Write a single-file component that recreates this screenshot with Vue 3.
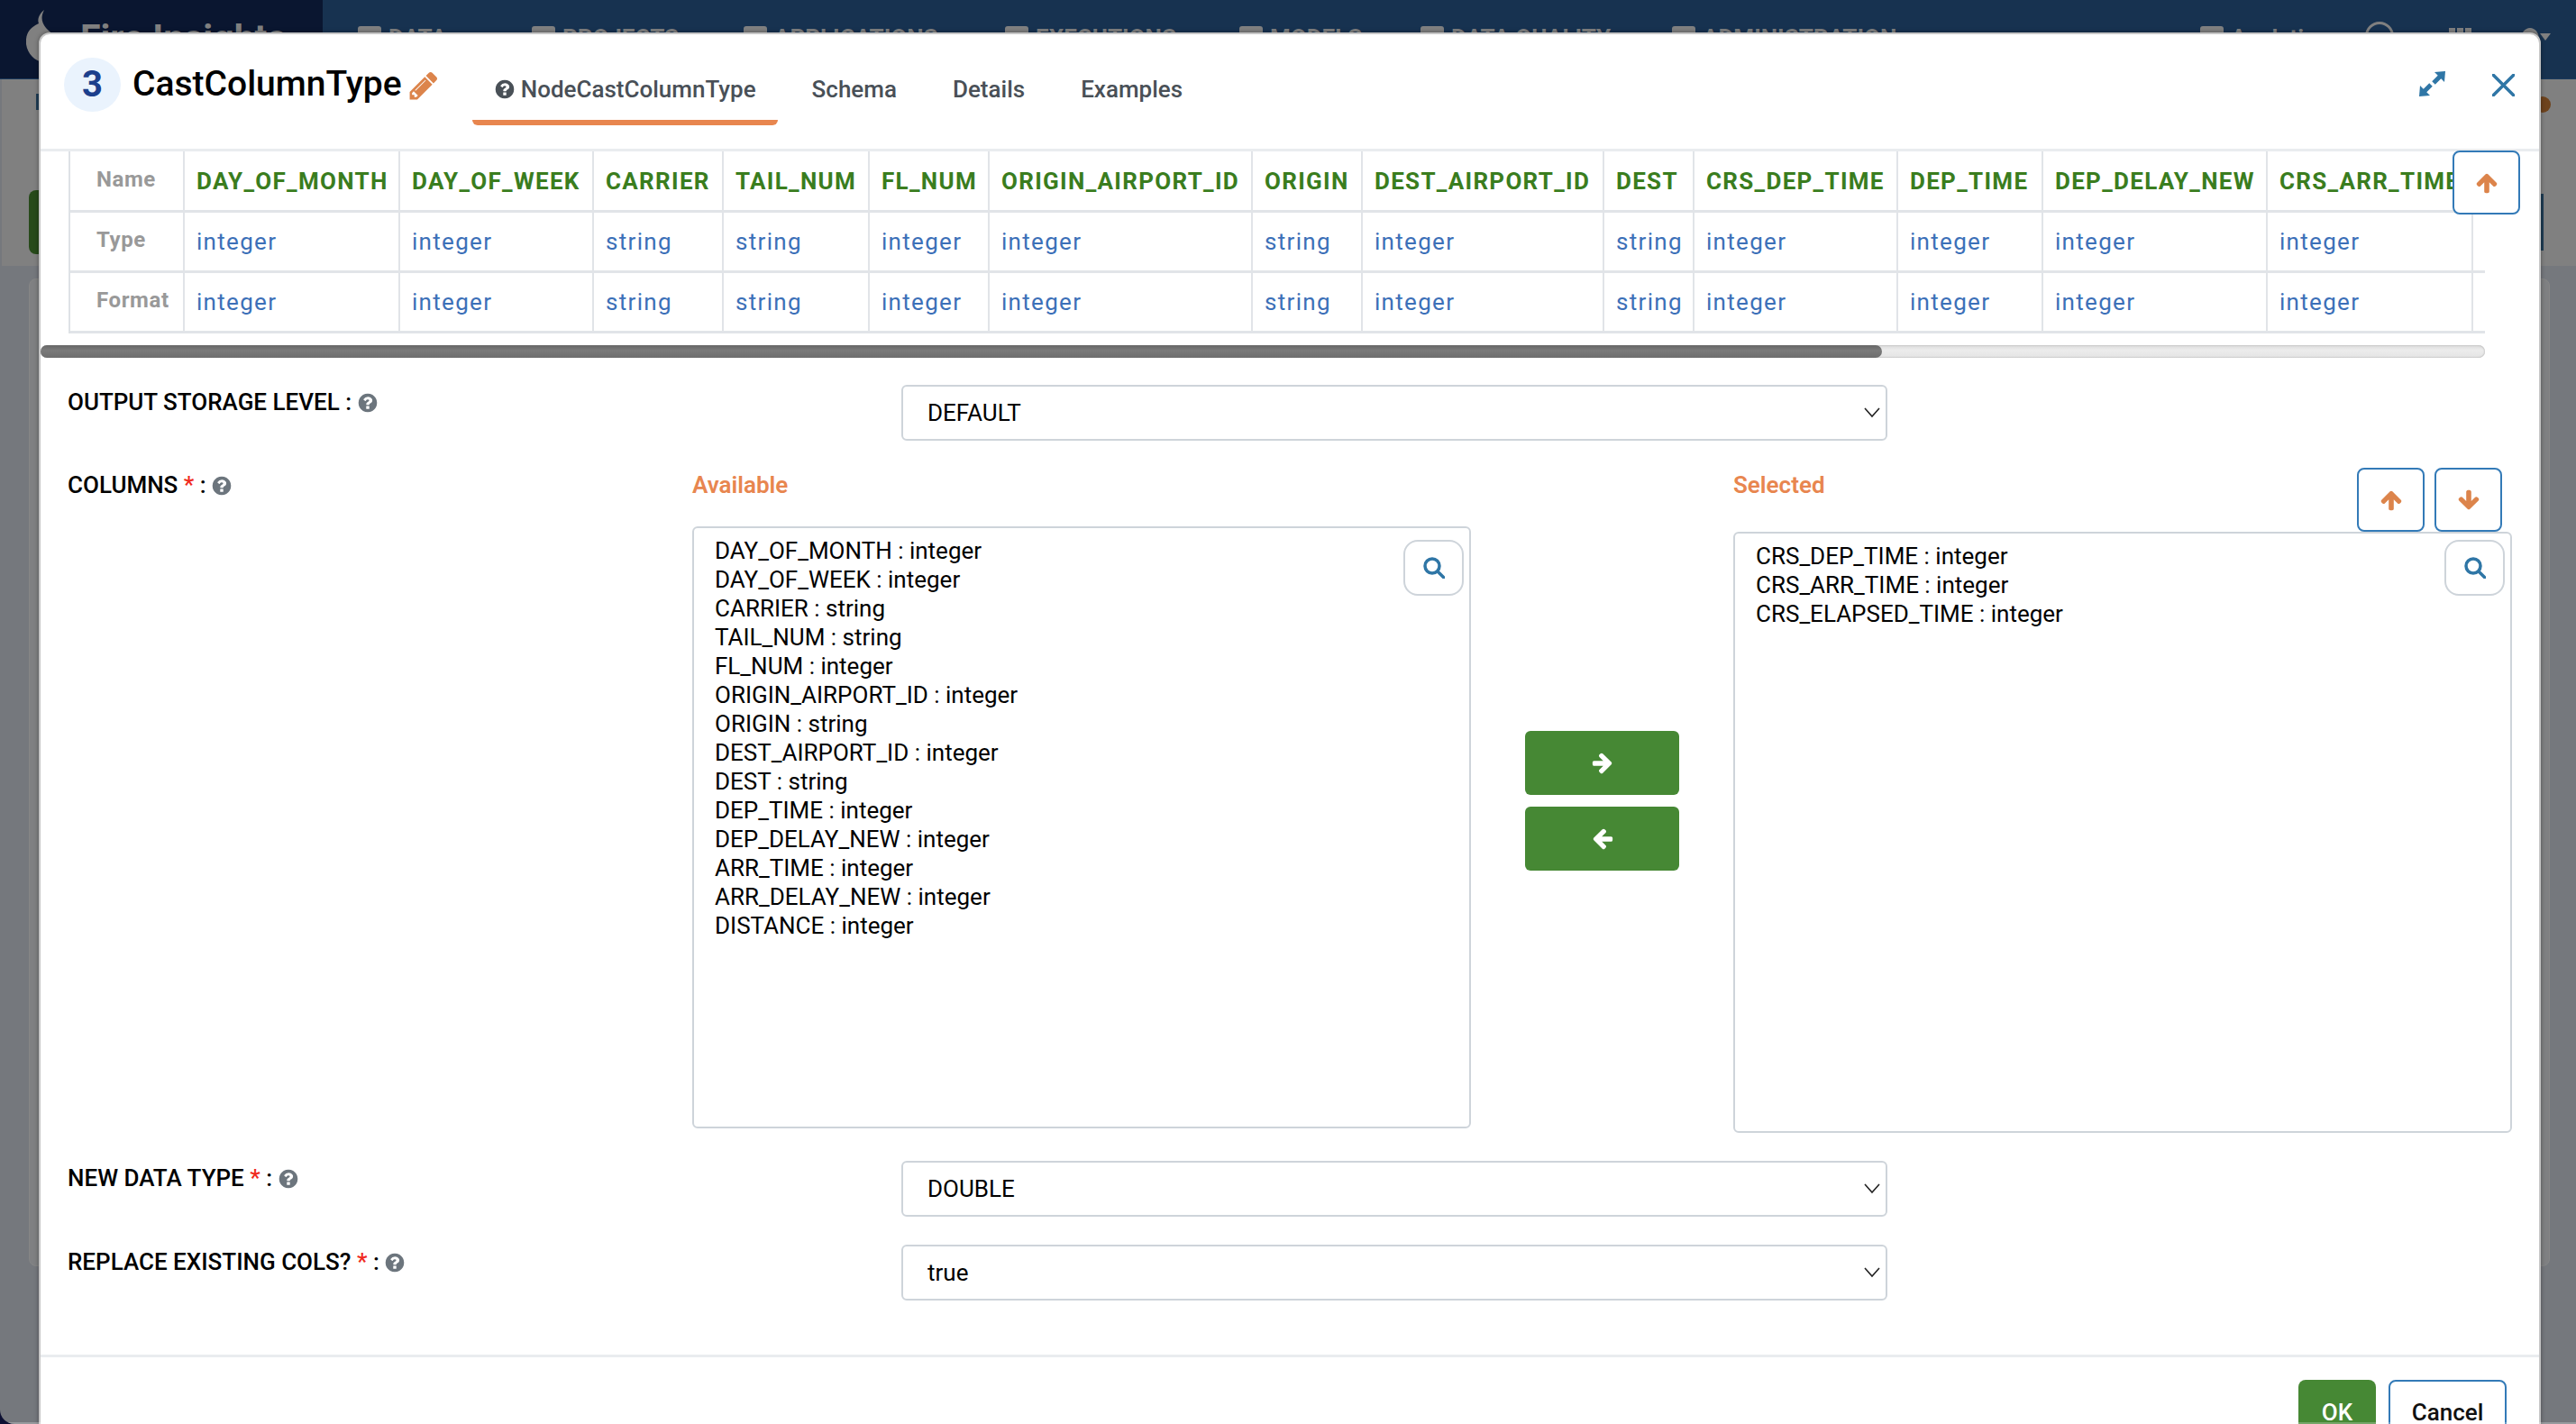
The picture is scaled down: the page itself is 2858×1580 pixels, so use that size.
<template>
  <div class="page">
    <!-- шапка за модалкой, видна только верхушка -->
    <header class="navbar">
      <div class="brand">
        <svg class="flame" viewBox="0 0 44 58">
          <path d="M20 0c-4 8-3 14 2 20 6 6 12 12 20 10 2 12-4 24-16 28-12 2-24-6-26-20C-1 26 4 20 14 15 12 10 15 4 20 0z" />
        </svg>
        <span class="brand-name">Fire Insights</span>
      </div>
      <nav class="nav">
        <a v-for="item in navItems" :key="item.label" class="nav-item" :style="{ width: item.width + 'px' }">
          <i class="nav-icon"></i>{{ item.label }}
        </a>
      </nav>
      <div class="nav-right">
        <span class="nav-item">
          <i class="nav-icon"></i>Analytics
        </span>
        <i class="nav-dot"></i>
        <i class="nav-grid"></i>
        <i class="nav-user"></i>
        <i class="nav-caret"></i>
      </div>
    </header>

    <div class="backdrop-top">
      <i class="bg-tab"></i>
      <i class="bg-btn"></i>
      <i class="bg-right-dot"></i>
      <i class="bg-right-line"></i>
    </div>
    <div class="bg-card"></div>

    <div class="modal">
      <div class="modal-head">
        <span class="step">3</span>
        <h2 class="title">CastColumnType</h2>
        <svg class="pencil" viewBox="0 0 1792 1792">
          <path :d="icons.pencil" />
        </svg>
        <ul class="tabs">
          <li class="tab active">
            <svg class="tab-help" viewBox="0 0 1792 1792"><path :d="icons.help" /></svg>
            NodeCastColumnType
          </li>
          <li class="tab">Schema</li>
          <li class="tab">Details</li>
          <li class="tab">Examples</li>
        </ul>
        <div class="head-actions">
          <svg class="expand" viewBox="0 0 29 28">
            <polygon points="17,1 29,0 28,12" />
            <polygon points="1,16 0,28 12,27" />
            <path d="M23 6l-7 7M6 22l7-7" />
          </svg>
          <svg class="close" viewBox="0 0 25 25">
            <path d="M1 1l23 23M24 1L1 24" />
          </svg>
        </div>
      </div>

      <div class="schema-wrap">
        <table class="schema">
          <tbody>
            <tr v-for="row in rows" :key="row.name">
              <th class="row-name">{{ row.name }}</th>
              <td
                v-for="col in columns"
                :key="col.name"
                :class="row.key === 'name' ? 'col-name' : 'col-type'"
                :style="{ width: col.width + 'px', minWidth: col.width + 'px' }"
              >
                {{ col[row.key] }}
              </td>
            </tr>
          </tbody>
        </table>
      </div>
      <div class="hscroll">
        <div class="hscroll-thumb" :style="{ width: thumbWidth + '%' }"></div>
      </div>
      <button class="btn-outline schema-top">
        <svg class="arrow" viewBox="0 0 1792 1792"><path :d="icons.up" /></svg>
      </button>

      <div class="form">
        <div class="form-row">
          <label class="label">
            OUTPUT STORAGE LEVEL :
            <svg class="help" viewBox="0 0 1792 1792"><path :d="icons.help" /></svg>
          </label>
          <div class="select-wrap">
            <select class="select"><option>DEFAULT</option></select>
            <svg class="chevron" viewBox="0 0 18 12"><path d="M1 1l8 9 8-9" /></svg>
          </div>
        </div>

        <div class="form-row columns-row">
          <label class="label columns-label">
            COLUMNS <em>*</em> :
            <svg class="help" viewBox="0 0 1792 1792"><path :d="icons.help" /></svg>
          </label>

          <div class="dual">
            <div class="dual-col">
              <div class="dual-head left-head">Available</div>
              <div class="listbox left-box">
                <div v-for="item in available" :key="item" class="list-item">{{ item }}</div>
                <button class="btn-search">
                  <svg viewBox="0 0 24 24"><circle cx="10" cy="10" r="8" /><path d="M16 16l7 7" /></svg>
                </button>
              </div>
            </div>

            <div class="move">
              <button class="btn-move">
                <svg class="arrow" viewBox="0 0 1792 1792"><path :d="icons.right" /></svg>
              </button>
              <button class="btn-move">
                <svg class="arrow" viewBox="0 0 1792 1792"><path :d="icons.left" /></svg>
              </button>
            </div>

            <div class="dual-col">
              <div class="dual-head right-head">
                <span>Selected</span>
                <div class="order">
                  <button class="btn-outline order-btn">
                    <svg class="arrow" viewBox="0 0 1792 1792"><path :d="icons.up" /></svg>
                  </button>
                  <button class="btn-outline order-btn">
                    <svg class="arrow" viewBox="0 0 1792 1792"><path :d="icons.down" /></svg>
                  </button>
                </div>
              </div>
              <div class="listbox right-box">
                <div v-for="item in selected" :key="item" class="list-item">{{ item }}</div>
                <button class="btn-search">
                  <svg viewBox="0 0 24 24"><circle cx="10" cy="10" r="8" /><path d="M16 16l7 7" /></svg>
                </button>
              </div>
            </div>
          </div>
        </div>

        <div class="form-row">
          <label class="label">
            NEW DATA TYPE <em>*</em> :
            <svg class="help" viewBox="0 0 1792 1792"><path :d="icons.help" /></svg>
          </label>
          <div class="select-wrap">
            <select class="select"><option>DOUBLE</option></select>
            <svg class="chevron" viewBox="0 0 18 12"><path d="M1 1l8 9 8-9" /></svg>
          </div>
        </div>

        <div class="form-row">
          <label class="label">
            REPLACE EXISTING COLS? <em>*</em> :
            <svg class="help" viewBox="0 0 1792 1792"><path :d="icons.help" /></svg>
          </label>
          <div class="select-wrap">
            <select class="select"><option>true</option></select>
            <svg class="chevron" viewBox="0 0 18 12"><path d="M1 1l8 9 8-9" /></svg>
          </div>
        </div>
      </div>

      <div class="modal-foot">
        <button class="btn-ok">OK</button>
        <button class="btn-outline btn-cancel">Cancel</button>
      </div>
    </div>
    <div class="bottom-edge"></div>
  </div>
</template>

<script setup>
const icons = {
  help: 'M1024 1376v-192q0-14-9-23t-23-9h-192q-14 0-23 9t-9 23v192q0 14 9 23t23 9h192q14 0 23-9t9-23zm256-672q0-88-55.5-163t-138.5-116-170-41q-243 0-371 213-15 24 8 42l132 100q7 6 19 6 16 0 25-20 50-64 81-86 33-23 83-23 46 0 82 25t36 56q0 36-19 58t-64 42q-58 26-106.5 80t-48.5 116v36q0 14 9 23t23 9h192q14 0 23-9t9-23q0-18 20-45.5t51-45.5q30-17 46-27t43.5-33 42-44 26.5-54 12-70zm384 192q0 209-103 385.5t-279.5 279.5-385.5 103-385.5-103-279.5-279.5-103-385.5 103-385.5 279.5-279.5 385.5-103 385.5 103 279.5 279.5 103 385.5z',
  pencil: 'M491 1536l91-91-235-235-91 91v107h128v128h107zm523-928q0-22-22-22-10 0-17 7l-542 542q-7 7-7 17 0 22 22 22 10 0 17-7l542-542q7-7 7-17zm-54-192l416 416-832 832h-416v-416zm683 96q0 53-37 90l-166 166-416-416 166-165q36-38 90-38 53 0 91 38l235 234q37 39 37 91z',
  up: 'M1675 971q0 51-37 90l-75 75q-38 38-91 38-54 0-90-38l-294-293v704q0 52-37.5 84.5t-90.5 32.5h-128q-53 0-90.5-32.5t-37.5-84.5v-704l-294 293q-36 38-90 38t-90-38l-75-75q-38-38-38-90 0-53 38-91l651-651q35-37 90-37 54 0 91 37l651 651q37 39 37 91z',
  down: 'M1675 832q0 53-37 90l-651 652q-39 37-91 37-53 0-90-37l-651-652q-38-36-38-90 0-53 38-91l74-75q39-37 91-37 53 0 90 37l294 294v-704q0-52 38-90t90-38h128q52 0 90 38t38 90v704l294-294q37-37 90-37 52 0 91 37l75 75q37 39 37 91z',
  right: 'M1600 960q0 54-37 91l-651 651q-39 37-91 37-51 0-90-37l-75-75q-38-38-38-91t38-91l293-293h-704q-52 0-84.5-37.5t-32.5-90.5v-128q0-53 32.5-90.5t84.5-37.5h704l-293-294q-38-36-38-90t38-90l75-75q38-38 90-38 53 0 91 38l651 651q37 35 37 90z',
  left: 'M1664 896v128q0 53-32.5 90.5t-84.5 37.5h-704l293 294q38 36 38 90t-38 90l-75 76q-37 37-90 37-52 0-91-37l-651-652q-37-37-37-90 0-52 37-91l651-650q38-38 91-38 52 0 90 38l75 74q38 38 38 91t-38 91l-293 293h704q52 0 84.5 37.5t32.5 90.5z'
}

const navItems = [
  { label: 'DATA', width: 193 },
  { label: 'PROJECTS', width: 235 },
  { label: 'APPLICATIONS', width: 290 },
  { label: 'EXECUTIONS', width: 260 },
  { label: 'MODELS', width: 201 },
  { label: 'DATA QUALITY', width: 279 },
  { label: 'ADMINISTRATION', width: 360 }
]

const columns = [
  { name: 'DAY_OF_MONTH', type: 'integer', width: 239 },
  { name: 'DAY_OF_WEEK', type: 'integer', width: 215 },
  { name: 'CARRIER', type: 'string', width: 144 },
  { name: 'TAIL_NUM', type: 'string', width: 162 },
  { name: 'FL_NUM', type: 'integer', width: 133 },
  { name: 'ORIGIN_AIRPORT_ID', type: 'integer', width: 292 },
  { name: 'ORIGIN', type: 'string', width: 122 },
  { name: 'DEST_AIRPORT_ID', type: 'integer', width: 268 },
  { name: 'DEST', type: 'string', width: 100 },
  { name: 'CRS_DEP_TIME', type: 'integer', width: 226 },
  { name: 'DEP_TIME', type: 'integer', width: 161 },
  { name: 'DEP_DELAY_NEW', type: 'integer', width: 249 },
  { name: 'CRS_ARR_TIME', type: 'integer', width: 228 },
  { name: 'ARR_TIME', type: 'integer', width: 170 },
  { name: 'ARR_DELAY_NEW', type: 'integer', width: 258 },
  { name: 'CRS_ELAPSED_TIME', type: 'integer', width: 294 },
  { name: 'DISTANCE', type: 'integer', width: 180 }
].map((c) => ({ ...c, format: c.type }))

const rows = [
  { name: 'Name', key: 'name' },
  { name: 'Type', key: 'type' },
  { name: 'Format', key: 'format' }
]

// ширина ползунка считается от ширины таблицы
const tableWidth = columns.reduce((sum, c) => sum + c.width, 159)
const thumbWidth = (2712 / tableWidth) * 100

const available = [
  'DAY_OF_MONTH : integer',
  'DAY_OF_WEEK : integer',
  'CARRIER : string',
  'TAIL_NUM : string',
  'FL_NUM : integer',
  'ORIGIN_AIRPORT_ID : integer',
  'ORIGIN : string',
  'DEST_AIRPORT_ID : integer',
  'DEST : string',
  'DEP_TIME : integer',
  'DEP_DELAY_NEW : integer',
  'ARR_TIME : integer',
  'ARR_DELAY_NEW : integer',
  'DISTANCE : integer'
]

const selected = [
  'CRS_DEP_TIME : integer',
  'CRS_ARR_TIME : integer',
  'CRS_ELAPSED_TIME : integer'
]
</script>

<style>
html,
body {
  margin: 0;
  background: #0d1033;
}
</style>

<style scoped>
.page {
  position: relative;
  width: 2858px;
  height: 1580px;
  overflow: hidden;
  background: #75787d;
  border-bottom-left-radius: 16px;
  font-family: Roboto, "Liberation Sans", sans-serif;
  color: #000;
}

/* navbar */
.navbar {
  display: flex;
  height: 87px;
  background: #173250;
  border-bottom: 1px solid #1b3a5c;
  color: #808080;
  font-weight: 700;
  font-size: 26px;
  box-sizing: content-box;
}

.brand {
  display: flex;
  align-items: flex-start;
  width: 358px;
  background: #0a1630;
}

.flame {
  width: 44px;
  height: 58px;
  margin: 11px 0 0 29px;
  fill: #808080;
}

.brand-name {
  margin: 14px 0 0 16px;
  font-size: 41px;
  line-height: 56px;
}

.nav {
  display: flex;
  padding: 25px 0 0 39px;
}

.nav-item {
  display: flex;
  align-items: flex-start;
  line-height: 34px;
  white-space: nowrap;
}

.nav-icon {
  width: 26px;
  height: 24px;
  margin: 4px 8px 0 0;
  background: #808080;
  border-radius: 3px;
}

.nav-right {
  position: absolute;
  left: 2441px;
  top: 25px;
  display: flex;
}

.nav-dot {
  width: 32px;
  height: 32px;
  margin: -1px 0 0 41px;
  box-sizing: border-box;
  border: 3px solid #808080;
  border-radius: 50%;
}

.nav-grid {
  width: 25px;
  height: 24px;
  margin: 6px 0 0 61px;
  background: repeating-linear-gradient(90deg, #808080 0 7px, transparent 7px 9px);
}

.nav-user {
  width: 20px;
  height: 24px;
  margin: 6px 0 0 55px;
  background: #808080;
  border-radius: 50%;
}

.nav-caret {
  width: 0;
  height: 0;
  margin: 12px 0 0 1px;
  border-style: solid;
  border-width: 8px 6px 0;
  border-color: #808080 transparent transparent;
}

/* то, что видно по краям за модалкой */
.backdrop-top {
  position: relative;
  height: 207px;
  margin-left: 2px;
  background: #808080;
}

.bg-tab {
  position: absolute;
  left: 38px;
  top: 16px;
  width: 10px;
  height: 18px;
  background: #1f3d55;
}

.bg-btn {
  position: absolute;
  left: 30px;
  top: 123px;
  width: 20px;
  height: 71px;
  border-radius: 8px;
  background: #274a1a;
}

.bg-right-dot {
  position: absolute;
  right: 28px;
  top: 19px;
  width: 18px;
  height: 18px;
  border-radius: 50%;
  background: #6e431d;
}

.bg-right-line {
  position: absolute;
  right: 36px;
  top: 127px;
  width: 3px;
  height: 63px;
  background: #1f3d55;
}

.bg-card {
  margin: 14px 29px 0 32px;
  height: 1096px;
  background: #7f8082;
  border: 1px solid #868686;
  border-radius: 8px;
  box-sizing: border-box;
}

.bottom-edge {
  position: absolute;
  left: 0;
  right: 0;
  bottom: 0;
  height: 2px;
  background: rgba(255, 255, 255, 0.25);
}

/* modal */
.modal {
  position: absolute;
  left: 43px;
  top: 36px;
  width: 2776px;
  height: 1600px;
  box-sizing: border-box;
  background: #fff;
  border: 2px solid #c6c6c6;
  border-radius: 12px;
  box-shadow: 0 0 5px rgba(0, 0, 0, 0.4);
}

.modal-head {
  display: flex;
  align-items: flex-start;
  height: 127px;
  padding-left: 26px;
  border-bottom: 3px solid #e9ecef;
  box-sizing: content-box;
}

.step {
  width: 63px;
  height: 60px;
  margin-top: 26px;
  border-radius: 50%;
  background: #eaf3fd;
  color: #1c3f8c;
  font-size: 40px;
  font-weight: 700;
  line-height: 60px;
  text-align: center;
}

.title {
  margin: 26px 0 0 13px;
  font-size: 39px;
  font-weight: 500;
  line-height: 58px;
}

.pencil {
  width: 36px;
  height: 36px;
  margin: 39px 0 0 6px;
  fill: #dc844b;
}

.tabs {
  display: flex;
  gap: 14px;
  margin: 0 0 0 36px;
  padding: 0;
  list-style: none;
}

.tab {
  display: flex;
  align-items: center;
  height: 36px;
  padding: 43px 24px 16px;
  border-bottom: 6px solid transparent;
  border-radius: 0 0 6px 6px;
  color: #495057;
  font-size: 26px;
  font-weight: 500;
}

.tab.active {
  border-bottom-color: #e8864f;
}

.tab-help {
  width: 24px;
  height: 24px;
  margin-right: 6px;
  fill: #495057;
}

.head-actions {
  display: flex;
  gap: 52px;
  margin: 41px 0 0 auto;
  padding-right: 27px;
}

.expand {
  width: 29px;
  height: 28px;
  fill: #2f76a6;
  stroke: #2f76a6;
  stroke-width: 0;
}

.expand path {
  fill: none;
  stroke-width: 5;
}

.close {
  width: 25px;
  height: 25px;
  margin-top: 3px;
  fill: none;
  stroke: #2f76a6;
  stroke-width: 3.5;
  stroke-linecap: round;
}

/* schema table */
.schema-wrap {
  width: 2712px;
  padding-left: 31px;
  box-sizing: border-box;
  overflow: hidden;
}

.schema {
  border-collapse: separate;
  border-spacing: 0;
  border-left: 2px solid #dee2e6;
}

.schema th,
.schema td {
  height: 67px;
  box-sizing: border-box;
  padding: 0 0 0 13px;
  border-right: 2px solid #e1e4e8;
  border-bottom: 3px solid #e1e4e8;
  text-align: left;
  white-space: nowrap;
  font-size: 26px;
  letter-spacing: 1.3px;
}

.schema tr:first-child th,
.schema tr:first-child td {
  height: 68px;
}

.row-name {
  width: 127px;
  min-width: 127px;
  padding: 0 0 4px 29px !important;
  box-sizing: border-box;
  color: #999;
  font-size: 24px !important;
  font-weight: 700;
  letter-spacing: 0.6px !important;
}

.col-name {
  color: #3a7d1e;
  font-weight: 700;
}

.col-type {
  color: #3c70b8;
}

.hscroll {
  width: 2712px;
  height: 14px;
  margin-top: 13px;
  border-radius: 7px;
  background: linear-gradient(#dcdcdc, #ececec 40%, #e4e4e4);
  box-shadow: inset 0 0 2px #999;
}

.hscroll-thumb {
  height: 100%;
  border-radius: 7px;
  background: linear-gradient(#666, #7a7a7a 40%, #6e6e6e);
}

.btn-outline {
  display: flex;
  align-items: center;
  justify-content: center;
  padding: 0;
  background: #fff;
  border: 2px solid #337ab7;
  border-radius: 8px;
  box-sizing: border-box;
}

.arrow {
  width: 26px;
  height: 26px;
  fill: #dc844b;
}

.schema-top {
  position: absolute;
  left: 2676px;
  top: 129px;
  width: 75px;
  height: 71px;
}

/* form */
.form {
  padding: 30px 30px 0;
}

.form-row {
  display: flex;
  margin-bottom: 31px;
}

.form-row:first-child {
  margin-bottom: 30px;
}

.label {
  display: block;
  width: 925px;
  flex-shrink: 0;
  font-size: 26px;
  font-weight: 500;
  line-height: 38px;
  white-space: nowrap;
}

.label em {
  color: #f02a1d;
  font-style: normal;
}

.help {
  width: 24px;
  height: 24px;
  margin-left: -1px;
  vertical-align: -4px;
  fill: #6c757d;
}

.select-wrap {
  position: relative;
  width: 1094px;
}

.select {
  display: block;
  width: 100%;
  height: 62px;
  padding: 0 0 0 27px;
  appearance: none;
  box-sizing: border-box;
  background: #fff;
  border: 2px solid #ced4da;
  border-radius: 6px;
  color: #000;
  font-family: inherit;
  font-size: 26px;
}

.chevron {
  position: absolute;
  right: 8px;
  top: 25px;
  width: 18px;
  height: 12px;
  fill: none;
  stroke: #222;
  stroke-width: 1.6;
  pointer-events: none;
}

.columns-label {
  width: 693px;
}

.dual {
  display: flex;
}

.dual-col {
  width: 864px;
}

.dual-head {
  color: #e8864f;
  font-size: 26px;
  font-weight: 600;
  line-height: 38px;
}

.left-head {
  height: 65px;
}

.right-head {
  display: flex;
  justify-content: space-between;
  height: 71px;
  padding-right: 11px;
  box-sizing: border-box;
}

.order {
  display: flex;
  gap: 11px;
}

.order-btn {
  width: 75px;
  height: 71px;
}

.listbox {
  position: relative;
  box-sizing: border-box;
  padding: 9px 23px;
  background: #fff;
  border: 2px solid #ced4da;
  border-radius: 6px;
  font-size: 26px;
  line-height: 32px;
}

.left-box {
  height: 668px;
}

.right-box {
  height: 667px;
}

.btn-search {
  position: absolute;
  top: 13px;
  right: 6px;
  display: flex;
  align-items: center;
  justify-content: center;
  width: 67px;
  height: 62px;
  padding: 0;
  box-sizing: border-box;
  background: #fff;
  border: 2px solid #ced4da;
  border-radius: 16px;
}

.right-box .btn-search {
  top: 7px;
}

.btn-search svg {
  width: 24px;
  height: 24px;
  fill: none;
  stroke: #2f76a6;
  stroke-width: 3.5;
  stroke-linecap: round;
}

.move {
  display: flex;
  flex-direction: column;
  align-items: center;
  justify-content: center;
  gap: 13px;
  width: 291px;
}

.btn-move {
  display: flex;
  align-items: center;
  justify-content: center;
  width: 171px;
  height: 71px;
  padding: 0;
  background: #468834;
  border: none;
  border-radius: 6px;
}

.btn-move .arrow {
  fill: #fff;
}

/* footer */
.modal-foot {
  display: flex;
  justify-content: flex-end;
  gap: 14px;
  padding: 25px 36px 0 0;
  border-top: 3px solid #e9ecef;
  margin-top: 60px;
}

.btn-ok {
  width: 86px;
  height: 71px;
  padding: 0;
  background: #468834;
  border: none;
  border-radius: 8px;
  color: #fff;
  font-family: inherit;
  font-size: 26px;
  font-weight: 500;
}

.btn-cancel {
  width: 131px;
  height: 71px;
  font-family: inherit;
  font-size: 26px;
  font-weight: 500;
  color: #111;
}
</style>
